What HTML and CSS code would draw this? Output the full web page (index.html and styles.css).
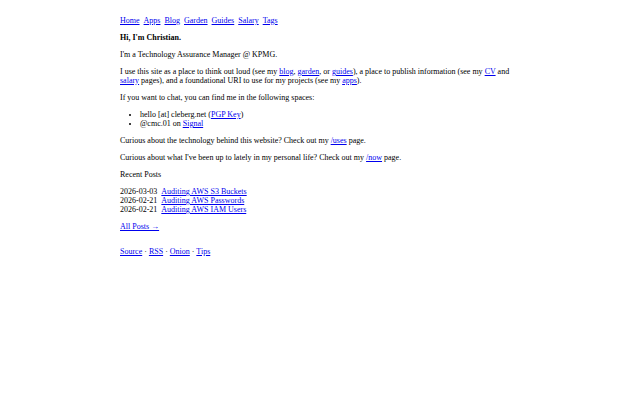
FILE: index.html
```html
<!DOCTYPE html>
<html lang="en">
<head>
<meta charset="utf-8">
<title>cleberg.net</title>
<link rel="stylesheet" href="styles.css">
</head>
<body>
<div class="page">
  <nav class="nav">
    <a href="#">Home</a>
    <a href="#">Apps</a>
    <a href="#">Blog</a>
    <a href="#">Garden</a>
    <a href="#">Guides</a>
    <a href="#">Salary</a>
    <a href="#">Tags</a>
  </nav>
  <main>
    <p class="title">Hi, I'm Christian.</p>
    <p>I'm a Technology Assurance Manager @ KPMG.</p>
    <p>I use this site as a place to think out loud (see my <a href="#">blog</a>, <a href="#">garden</a>, or <a href="#">guides</a>), a place to publish information (see my <a href="#">CV</a> and <a href="#">salary</a> pages), and a foundational URI to use for my projects (see my <a href="#">apps</a>).</p>
    <p>If you want to chat, you can find me in the following spaces:</p>
    <ul class="list">
      <li>hello [at] cleberg.net (<a href="#">PGP Key</a>)</li>
      <li>@cmc.01 on <a href="#">Signal</a></li>
    </ul>
    <p>Curious about the technology behind this website? Check out my <a href="#">/uses</a> page.</p>
    <p>Curious about what I've been up to lately in my personal life? Check out my <a href="#">/now</a> page.</p>
    <p>Recent Posts</p>
    <div class="posts">
      <div class="post"><span class="date">2026-03-03</span><a href="#">Auditing AWS S3 Buckets</a></div>
      <div class="post"><span class="date">2026-02-21</span><a href="#">Auditing AWS Passwords</a></div>
      <div class="post"><span class="date">2026-02-21</span><a href="#">Auditing AWS IAM Users</a></div>
    </div>
    <p><a href="#">All Posts →</a></p>
  </main>
  <footer class="footer">
    <a href="#">Source</a> · <a href="#">RSS</a> · <a href="#">Onion</a> · <a href="#">Tips</a>
  </footer>
</div>
</body>
</html>
```
FILE: styles.css
```css
html, body {
  margin: 0;
  padding: 0;
  background: #ffffff;
}
body {
  font-family: "Liberation Serif", "Times New Roman", serif;
  font-size: 8px;
  color: #000000;
}
.page {
  width: 400px;
  margin: 0 auto;
  padding-top: 16px;
}
a {
  color: #0000ee;
}
.nav {
  display: flex;
  gap: 4px;
  margin: 0 0 8px 0;
}
p {
  margin: 8px 0;
}
.title {
  font-weight: bold;
}
.list {
  margin: 8px 0;
  padding-left: 20px;
}
.posts {
  margin: 8px 0;
}
.post .date {
  margin-right: 4px;
}
.footer {
  margin-top: 16px;
}
```
